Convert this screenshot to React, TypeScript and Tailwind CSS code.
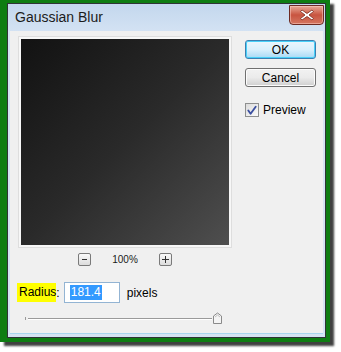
import React from "react";

const font = { fontFamily: '"Liberation Sans", Arial, sans-serif' };

function CloseX() {
  return (
    <svg width="16" height="14" viewBox="0 0 16 14">
      <path
        d="M3 2 L8 5.5 L13 2 L14.5 3.5 L10 7 L14.5 10.5 L13 12 L8 8.5 L3 12 L1.5 10.5 L6 7 L1.5 3.5 Z"
        fill="#ffffff"
        stroke="#7a2a20"
        strokeWidth="0.8"
        strokeLinejoin="round"
      />
    </svg>
  );
}

function Check() {
  return (
    <svg width="13" height="13" viewBox="0 0 13 13">
      <path d="M2.5 6.5 L5 10 L10.5 2.5" fill="none" stroke="#3b4fa0" strokeWidth="2" strokeLinecap="round" strokeLinejoin="round" />
    </svg>
  );
}

function Thumb() {
  return (
    <svg width="11" height="13" viewBox="0 0 11 13">
      <path d="M1.5 11.5 L1.5 4 L5.5 1 L9.5 4 L9.5 11.5 Z" fill="#f4f4f4" stroke="#8a8a8a" strokeWidth="1" />
      <path d="M3 5 L5.5 3 L8 5" fill="none" stroke="#c0c0c0" strokeWidth="1" />
    </svg>
  );
}

export default function App() {
  return (
    <div className="w-[341px] h-[352px] bg-white" style={font}>
      <div className="w-[330px] h-[342px] bg-[#0e7d12] pl-[7px] pt-[3px] pr-[4px] pb-[4px] shadow-[4px_4px_2px_rgba(30,30,30,0.85)]">
        <div className="w-full h-full border border-[#2f3336] bg-[#d5e4f3] flex flex-col">
          {/* Title bar */}
          <div className="h-[27px] flex items-start bg-gradient-to-b from-[#c3d7ed] to-[#d3e2f3]">
            <div className="pl-[7px] pt-[5px] text-[14px] leading-[16px] text-[#1b1b1b]">Gaussian Blur</div>
            <div className="flex-1" />
            <div className="mt-[1px] mr-[1px] w-[35px] h-[20px] rounded-b-[4px] border border-[#6d2a22] bg-gradient-to-b from-[#e6a898] via-[#c85440] to-[#d47662] flex items-center justify-center shadow-[inset_0_0_0_1px_rgba(255,210,200,0.5)]">
              <CloseX />
            </div>
          </div>
          {/* Client area */}
          <div className="flex-1 mx-[2px] mb-[3px] bg-[#f0f0f0] border-b border-[#a9d6ee] pl-[7px] pt-[8px] flex flex-col">
            <div className="flex ml-[4px]">
              <div className="flex flex-col w-[208px]">
                <div className="w-[208px] h-[206px] bg-gradient-to-br from-[#121212] via-[#2a2a2a] to-[#4f4f4f] shadow-[0_0_0_2px_#f7f7f7,0_0_0_3px_#dedede]" />
                <div className="mt-[8px] h-[13px] flex items-center justify-center">
                  <div className="w-[13px] h-[13px] border border-[#7a7a7a] rounded-[2px] bg-gradient-to-b from-[#fafafa] to-[#dcdcdc] flex items-center justify-center">
                    <div className="w-[5px] h-[1px] bg-[#333]" />
                  </div>
                  <div className="mx-[21px] text-[10px] leading-[12px] text-[#1a1a1a]">100%</div>
                  <div className="w-[13px] h-[13px] border border-[#7a7a7a] rounded-[2px] bg-gradient-to-b from-[#fafafa] to-[#dcdcdc] flex items-center justify-center relative">
                    <div className="w-[7px] h-[1px] bg-[#333]" />
                    <div className="absolute w-[1px] h-[7px] bg-[#333]" />
                  </div>
                </div>
              </div>
              <div className="ml-[16px] mt-[1px] flex flex-col w-[71px]">
                <div className="h-[19px] rounded-[3px] border border-[#3c7fb1] bg-gradient-to-b from-[#eaf6fd] via-[#d9f0fc] to-[#a7d9f5] shadow-[inset_0_0_0_1px_#48d0f8] flex items-center justify-center text-[12px] text-black">
                  OK
                </div>
                <div className="mt-[9px] h-[19px] rounded-[3px] border border-[#707070] bg-gradient-to-b from-[#f2f2f2] via-[#ebebeb] to-[#cfcfcf] shadow-[inset_0_0_0_1px_#fcfcfc] flex items-center justify-center text-[12px] text-black">
                  Cancel
                </div>
                <div className="mt-[16px] flex items-center">
                  <div className="w-[14px] h-[14px] border border-[#8e8f8f] bg-gradient-to-br from-[#dcdcdc] to-[#fafafa] flex items-center justify-center">
                    <Check />
                  </div>
                  <div className="ml-[4px] text-[12px] leading-[14px] text-black">Preview</div>
                </div>
              </div>
            </div>
            {/* Radius row */}
            <div className="mt-[16px] flex items-center h-[21px]">
              <div className="flex items-center h-[19px]">
                <span className="bg-[#ffff00] h-[19px] leading-[19px] pl-[2px] text-[12px] text-black">Radius</span>
                <span className="text-[12px] text-black">:</span>
              </div>
              <div className="ml-[4px] w-[56px] h-[21px] border border-[#93b4d3] bg-white flex items-center pl-[5px]">
                <span className="bg-[#3399ff] text-white text-[12px] leading-[15px] px-[1px]">181.4</span>
              </div>
              <div className="ml-[7px] text-[12px] text-black">pixels</div>
            </div>
            {/* Slider */}
            <div className="mt-[9px] ml-[8px] flex items-center h-[13px]">
              <div className="w-[3px] h-[3px] border-l border-[#9a9a9a]" />
              <div className="w-[184px] flex flex-col">
                <div className="h-[1px] bg-[#9a9a9a]" />
                <div className="h-[1px] bg-[#ffffff]" />
              </div>
              <Thumb />
            </div>
          </div>
        </div>
      </div>
    </div>
  );
}
